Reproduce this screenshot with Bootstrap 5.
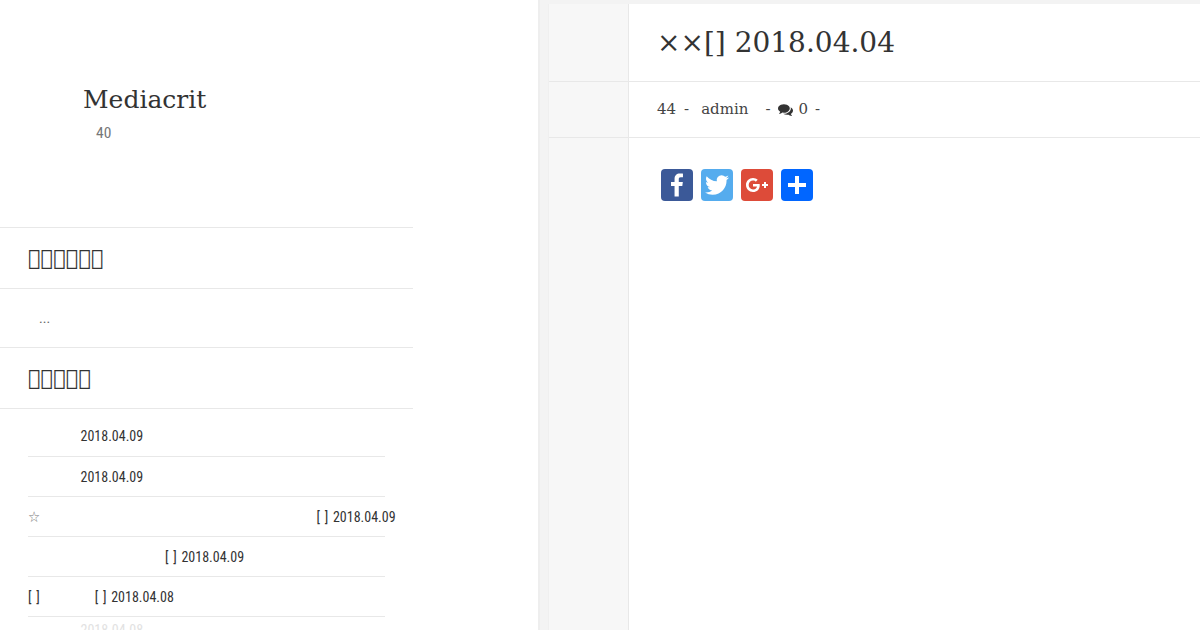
<!DOCTYPE html>
<html lang="en">
<head>
    <meta charset="UTF-8">
    <meta name="viewport" content="width=device-width, initial-scale=1.0">
    <title>Mediacrit</title>
    <link href="https://cdn.jsdelivr.net/npm/bootstrap@5.3.0/dist/css/bootstrap.min.css" rel="stylesheet">
    <style>
        html, body {
            height: 630px;
            overflow: hidden;
        }
        body {
            background-color: #fff;
            color: #333;
            font-family: "DejaVu Serif", serif;
        }
        .side-col {
            width: 538px;
            flex: none;
            height: 630px;
        }
        .side-inner {
            width: 413px;
        }
        .side-head {
            height: 228px;
            padding: 85px 0 0 83px;
            border-bottom: 1px solid #e8e8e8;
        }
        .site-name {
            font-size: 25px;
            line-height: 30px;
            margin: 0;
            font-weight: 400;
            color: #333;
        }
        .narrow {
            font-family: "Roboto Condensed", "Liberation Sans Narrow", Roboto, sans-serif;
            font-stretch: condensed;
        }
        .site-count {
            font-size: 15.5px;
            line-height: 20px;
            margin: 8px 0 0 13px;
            color: #777;
        }
        .widget-title {
            height: 61px;
            margin: 0;
            padding-left: 28px;
            font-size: 21px;
            font-weight: 400;
            line-height: 60px;
            border-bottom: 1px solid #e8e8e8;
        }
        .widget-text {
            height: 59px;
            padding: 19px 0 0 39px;
            font-size: 14px;
            line-height: 20px;
            color: #666;
            border-bottom: 1px solid #e8e8e8;
        }
        .post-rows {
            margin: 8px 28px 0;
            font-size: 14px;
            word-spacing: 1.5px;
            color: #333;
        }
        .post-row {
            height: 40px;
            line-height: 40px;
            white-space: nowrap;
            border-bottom: 1px solid #e8e8e8;
        }
        .post-row-first {
            line-height: 39px;
        }
        .post-row-faded {
            line-height: 26px;
            color: #e2e2e2;
            border-bottom: 0;
        }
        .star {
            color: #777;
            font-family: "DejaVu Sans", sans-serif;
            font-size: 15px;
        }
        .main-col {
            background-color: #f3f3f3;
            border-left: 2px solid #eee;
            padding: 4px 0 0 8px;
            height: 630px;
        }
        .main-box {
            background-color: #fff;
            height: 626px;
            border-left: 1px solid #efefef;
        }
        .main-row {
            border-bottom: 1px solid #e8e8e8;
        }
        .gutter {
            width: 80px;
            flex: none;
            background-color: #f7f7f7;
            border-right: 1px solid #e8e8e8;
        }
        .title-cell {
            height: 77px;
            padding-left: 28px;
        }
        .post-title {
            font-size: 28px;
            font-weight: 400;
            line-height: 78px;
            margin: 0;
            color: #333;
        }
        .meta-cell {
            height: 55px;
            padding-left: 28px;
            font-size: 15px;
            color: #444;
        }
        .meta-gap-5 { margin-left: 5px; }
        .meta-gap-7 { margin-left: 7px; }
        .meta-gap-8 { margin-left: 8px; }
        .meta-gap-12 { margin-left: 12px; }
        .meta-gap-17 { margin-left: 17px; }
        .share-cell {
            padding: 31px 0 0 32px;
        }
        .share-btn {
            width: 32px;
            height: 32px;
            border-radius: 4px;
            display: block;
        }
        .share-fb { background-color: #3b5998; }
        .share-tw { background-color: #55acee; }
        .share-gp { background-color: #dd4b39; }
        .share-add { background-color: #0166ff; }
        .comment-icon {
            width: 15px;
            height: 15px;
            fill: #333;
        }
    </style>
</head>
<body>
    <div class="d-flex">
        <div class="side-col">
            <div class="side-inner">
                <div class="side-head">
                    <h1 class="site-name">Mediacrit</h1>
                    <p class="site-count narrow">40</p>
                </div>
                <h2 class="widget-title">&#xE000;&#xE000;&#xE000;&#xE000;&#xE000;&#xE000;</h2>
                <div class="widget-text narrow">...</div>
                <h2 class="widget-title">&#xE000;&#xE000;&#xE000;&#xE000;&#xE000;</h2>
                <div class="post-rows narrow">
                    <div class="post-row post-row-first"><span class="d-inline-block" style="width: 52.5px"></span>2018.04.09</div>
                    <div class="post-row"><span class="d-inline-block" style="width: 52.5px"></span>2018.04.09</div>
                    <div class="post-row"><span class="star">☆</span><span class="d-inline-block" style="width: 276.4px"></span>[ ] 2018.04.09</div>
                    <div class="post-row"><span class="d-inline-block" style="width: 137px"></span>[ ] 2018.04.09</div>
                    <div class="post-row">[ ]<span class="d-inline-block" style="width: 55px"></span>[ ] 2018.04.08</div>
                    <div class="post-row post-row-faded"><span class="d-inline-block" style="width: 52.5px"></span>2018.04.08</div>
                </div>
            </div>
        </div>
        <div class="main-col flex-grow-1">
            <div class="main-box d-flex flex-column">
                <div class="main-row d-flex">
                    <div class="gutter"></div>
                    <div class="title-cell"><h1 class="post-title">××[] 2018.04.04</h1></div>
                </div>
                <div class="main-row d-flex">
                    <div class="gutter"></div>
                    <div class="meta-cell d-flex align-items-center">
                        <span>44</span>
                        <span class="meta-gap-8">-</span>
                        <span class="meta-gap-12">admin</span>
                        <span class="meta-gap-17">-</span>
                        <svg class="comment-icon meta-gap-8" viewBox="0 0 1792 1792"><path d="M1408 768q0 139-94 257t-256.500 186.500-353.500 68.500q-86 0-176-16-124 88-278 128-36 9-86 16h-3q-11 0-20.500-8t-11.500-21q-1-3-1-6.500t.5-6.500 2-6l2.500-5 3.500-5.500 4-5 4.500-5 4-4.500q5-6 23-25t26-29.500 22.500-29 25-38.500 20.500-44q-124-72-195-177t-71-224q0-139 94-257t256.500-186.500 353.500-68.500 353.500 68.500 256.500 186.500 94 257zm384 256q0 120-71 224.500t-195 176.500q10 24 20.500 44t25 38.500 22.500 29 26 29.500 23 25q1 1 4 4.500t4.500 5 4 5 3.500 5.500l2.500 5 2 6 .5 6.500-1 6.500q-3 14-13 22t-22 7q-50-7-86-16-154-40-278-128-90 16-176 16-271 0-472-132 58 4 88 4 161 0 309-45t264-129q125-92 192-212t67-254q0-77-23-152 129 71 204 178t75 230z"/></svg>
                        <span class="meta-gap-5">0</span>
                        <span class="meta-gap-7">-</span>
                    </div>
                </div>
                <div class="d-flex flex-grow-1">
                    <div class="gutter"></div>
                    <div class="share-cell d-flex gap-2 align-items-start">
                        <a class="share-btn share-fb" href="#"><svg viewBox="0 0 32 32" width="32" height="32"><path fill="#fff" d="M17.78 27.5V17.008h3.522l.527-4.09h-4.05v-2.61c0-1.182.33-1.99 2.023-1.99h2.166V4.66c-.375-.05-1.66-.16-3.155-.16-3.123 0-5.26 1.905-5.26 5.405v3.016h-3.53v4.09h3.53V27.5h4.223z"/></svg></a>
                        <a class="share-btn share-tw" href="#"><svg viewBox="0 0 32 32" width="32" height="32"><path fill="#fff" d="M28 8.557a9.913 9.913 0 0 1-2.828.775 4.93 4.93 0 0 0 2.166-2.725 9.738 9.738 0 0 1-3.13 1.194 4.92 4.92 0 0 0-3.593-1.55 4.924 4.924 0 0 0-4.794 6.049c-4.09-.21-7.72-2.17-10.15-5.15a4.942 4.942 0 0 0-.665 2.477c0 1.71.87 3.214 2.19 4.1a4.968 4.968 0 0 1-2.23-.616v.06c0 2.39 1.7 4.38 3.952 4.83-.414.115-.85.174-1.297.174-.318 0-.626-.03-.928-.086a4.935 4.935 0 0 0 4.6 3.42 9.893 9.893 0 0 1-6.114 2.107c-.398 0-.79-.023-1.175-.068a13.953 13.953 0 0 0 7.55 2.213c9.056 0 14.01-7.507 14.01-14.013 0-.213-.005-.426-.015-.637.96-.695 1.795-1.56 2.455-2.55z"/></svg></a>
                        <a class="share-btn share-gp" href="#"><svg viewBox="0 0 32 32" width="32" height="32"><path fill="#fff" d="M27 15h-2v-2h-2v2h-2v2h2v2h2v-2h2m-15-2v2.4h3.97c-.16 1.03-1.2 3.02-3.97 3.02-2.39 0-4.34-1.98-4.34-4.42s1.95-4.42 4.34-4.42c1.36 0 2.27.58 2.79 1.08l1.9-1.83C15.47 9.69 13.89 9 12 9c-3.87 0-7 3.13-7 7s3.13 7 7 7c4.04 0 6.72-2.84 6.72-6.84 0-.46-.05-.81-.11-1.16H12z"/></svg></a>
                        <a class="share-btn share-add" href="#"><svg viewBox="0 0 32 32" width="32" height="32"><path fill="#fff" d="M14 7h4v18h-4z M7 14h18v4H7z"/></svg></a>
                    </div>
                </div>
            </div>
        </div>
    </div>
    <script src="https://cdn.jsdelivr.net/npm/bootstrap@5.3.0/dist/js/bootstrap.bundle.min.js"></script>
</body>
</html>
